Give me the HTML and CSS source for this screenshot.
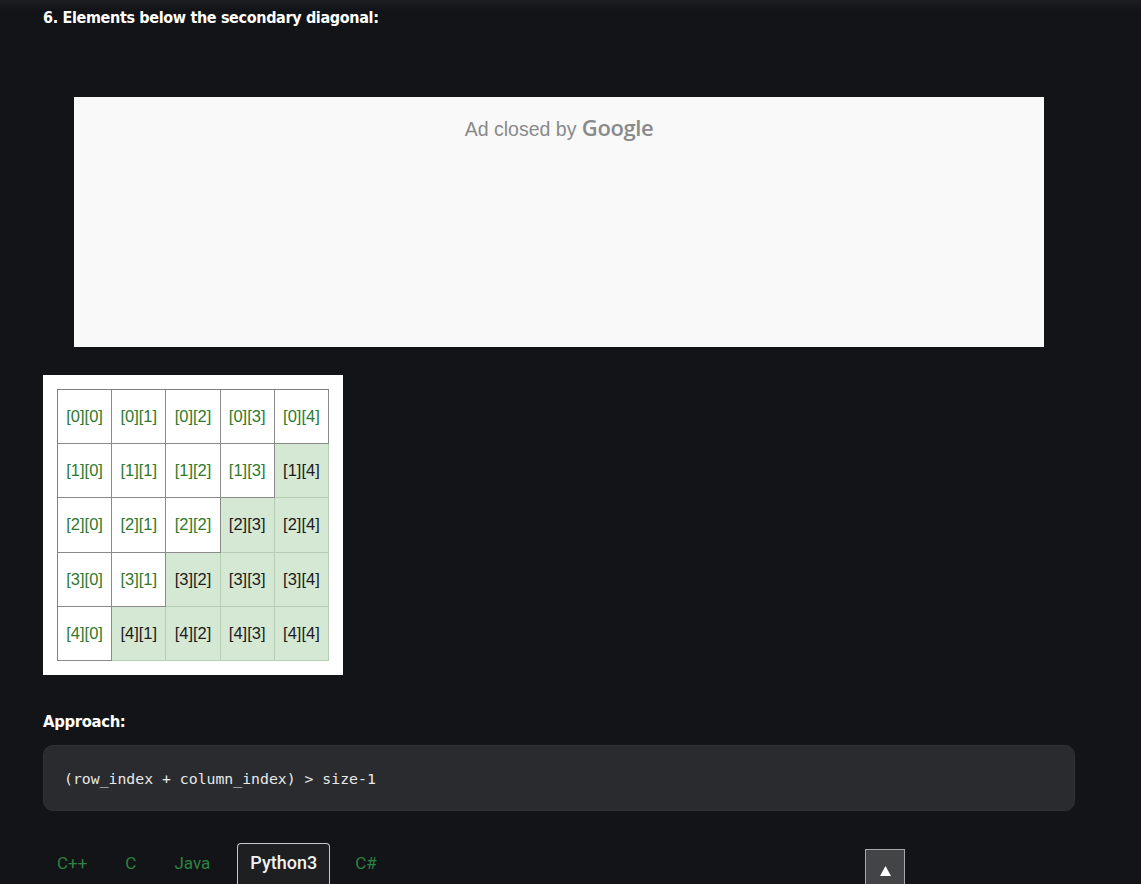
FILE: index.html
```html
<!DOCTYPE html>
<html>
<head>
<meta charset="utf-8">
<link rel="stylesheet" href="styles.css">
</head>
<body>
<div class="topshade"></div>
<main class="content">
  <h3 class="heading first">6. Elements below the secondary diagonal:</h3>
  <div class="ad">
    <p class="ad-text">Ad closed by <span class="google">Google</span></p>
  </div>
  <div class="figure">
    <div class="grid">
      <div class="c">[0][0]</div><div class="c">[0][1]</div><div class="c">[0][2]</div><div class="c">[0][3]</div><div class="c">[0][4]</div>
      <div class="c">[1][0]</div><div class="c">[1][1]</div><div class="c">[1][2]</div><div class="c">[1][3]</div><div class="c g">[1][4]</div>
      <div class="c">[2][0]</div><div class="c">[2][1]</div><div class="c">[2][2]</div><div class="c g">[2][3]</div><div class="c g">[2][4]</div>
      <div class="c">[3][0]</div><div class="c">[3][1]</div><div class="c g">[3][2]</div><div class="c g">[3][3]</div><div class="c g">[3][4]</div>
      <div class="c">[4][0]</div><div class="c g">[4][1]</div><div class="c g">[4][2]</div><div class="c g">[4][3]</div><div class="c g">[4][4]</div>
    </div>
  </div>
  <h3 class="heading approach">Approach:</h3>
  <pre class="code">(row_index + column_index) &gt; size-1</pre>
  <div class="tabs">
    <span class="tab">C++</span>
    <span class="tab">C</span>
    <span class="tab">Java</span>
    <span class="tab active">Python3</span>
    <span class="tab">C#</span>
    <button class="totop" aria-label="Scroll to top"><svg width="11" height="10" viewBox="0 0 11 10"><polygon points="5.5,0 11,10 0,10" fill="#ffffff"/></svg></button>
  </div>
  <div class="panel"></div>
</main>
</body>
</html>
```
FILE: styles.css
```css
html, body {
  margin: 0;
  padding: 0;
  background: #131417;
  overflow: hidden;
}
body {
  width: 1141px;
  height: 884px;
  position: relative;
}
.topshade {
  position: absolute;
  left: 0;
  top: 0;
  right: 0;
  height: 10px;
  background: linear-gradient(#1d1e22, #131417);
}
.content {
  position: relative;
  padding: 0 66px 0 43px;
}
.heading {
  margin: 0;
  font-family: "DejaVu Sans Condensed", "DejaVu Sans", sans-serif;
  font-weight: bold;
  color: #ffffff;
  font-size: 16px;
  line-height: 20px;
  letter-spacing: -0.35px;
}
.first {
  padding-top: 8px;
}
.ad {
  width: 970px;
  height: 250px;
  margin: 69px auto 0;
  background: #f9f9f9;
  display: flex;
  justify-content: center;
}
.ad-text {
  margin: 15px 0 0;
  font-family: "Liberation Sans", Arial, sans-serif;
  font-size: 19.5px;
  color: #8a8a8a;
}
.google {
  font-family: "Open Sans", "Liberation Sans", sans-serif;
  font-weight: 600;
  font-size: 22px;
  letter-spacing: -0.4px;
}
.figure {
  width: 300px;
  height: 300px;
  box-sizing: border-box;
  margin-top: 28px;
  background: #ffffff;
  padding: 14px;
}
.grid {
  display: grid;
  grid-template-columns: repeat(5, 1fr);
  grid-template-rows: repeat(5, 1fr);
  width: 272px;
  height: 272px;
  border-top: 1px solid #7f7f7f;
  border-left: 1px solid #7f7f7f;
  box-sizing: border-box;
}
.c {
  display: flex;
  align-items: center;
  justify-content: center;
  border-right: 1px solid #8a8a8a;
  border-bottom: 1px solid #8a8a8a;
  font-family: "Liberation Sans", Arial, sans-serif;
  font-size: 16.5px;
  color: #2e7a2e;
  background: #ffffff;
}
.c.g {
  background: #d5e8d4;
  color: #1c1c1c;
  border-right-color: #b6cfb4;
  border-bottom-color: #b6cfb4;
}
.approach {
  margin-top: 37px;
  font-size: 16.5px;
}
.code {
  margin: 13px 0 0;
  height: 66px;
  box-sizing: border-box;
  background: #2a2b2e;
  border: 1px solid #313236;
  border-radius: 10px;
  padding: 23px 20px 0;
  font-family: "DejaVu Sans Mono", "Liberation Mono", monospace;
  font-size: 14.8px;
  line-height: 20px;
  color: #e8e8e8;
}
.tabs {
  margin-top: 31px;
  height: 42px;
  display: flex;
  align-items: flex-end;
  position: relative;
}
.tab {
  font-family: "Roboto", "Liberation Sans", sans-serif;
  font-size: 17px;
  color: #2d8341;
  height: 41px;
  box-sizing: border-box;
  padding: 10px 19px 0;
  line-height: 20px;
}
.tab:first-child {
  padding-left: 14px;
}
.tab.active {
  margin-left: 8px;
  margin-right: 6px;
  background: #1e1f21;
  border: 1px solid #c8c8c8;
  border-bottom: none;
  border-radius: 4px 4px 0 0;
  color: #f2f2f2;
  font-weight: 500;
  font-size: 18px;
  padding: 9px 0 0;
  width: 93px;
  text-align: center;
}
.totop {
  position: absolute;
  left: 822px;
  top: 7px;
  width: 40px;
  height: 36px;
  background: #434445;
  border: 1px solid #a8a8a8;
  padding: 16px 0 0;
  margin: 0;
  box-sizing: border-box;
  display: flex;
  justify-content: center;
  align-items: flex-start;
}
.totop svg {
  display: block;
}
.panel {
  height: 2px;
  border: 1px solid #c8c8c8;
  border-bottom: none;
  box-sizing: border-box;
}
```
